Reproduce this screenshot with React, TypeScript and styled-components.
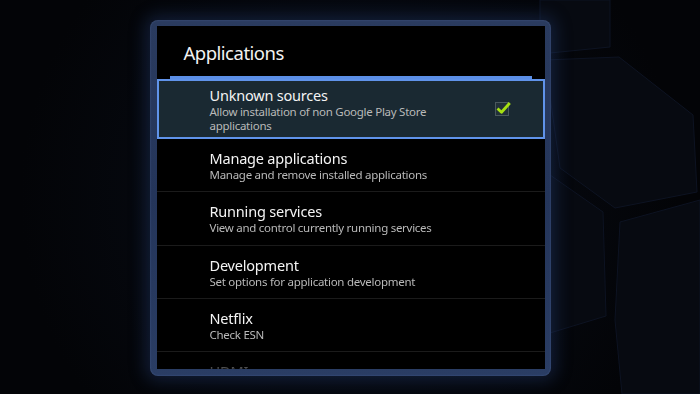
import React from 'react';
import styled, { createGlobalStyle } from 'styled-components';

const GlobalStyle = createGlobalStyle`
    html, body {
        margin: 0;
        padding: 0;
        background: #030407;
    }
    body {
        font-family: "Noto Sans", "Open Sans", "DejaVu Sans", sans-serif;
    }
`;

type Item = {
    title: string;
    summary: string;
    checked?: boolean;
};

const items: Item[] = [
    { title: 'Unknown sources', summary: 'Allow installation of non Google Play Store applications', checked: true },
    { title: 'Manage applications', summary: 'Manage and remove installed applications' },
    { title: 'Running services', summary: 'View and control currently running services' },
    { title: 'Development', summary: 'Set options for application development' },
    { title: 'Netflix', summary: 'Check ESN' },
    { title: 'HDMI', summary: 'Output settings' },
];

// faint hexagon tiles of the launcher wallpaper
const Wallpaper = () => (
    <Backdrop viewBox="0 0 700 394" preserveAspectRatio="none">
        <defs>
            <radialGradient id="halo" cx="350" cy="197" r="330" gradientUnits="userSpaceOnUse">
                <stop offset="0" stopColor="#090e19" />
                <stop offset="1" stopColor="#030407" />
            </radialGradient>
        </defs>
        <rect width="700" height="394" fill="url(#halo)" />
        <g fill="#070a11" stroke="#0d1322" strokeWidth="1">
            <polygon points="540,0 610,0 610,47 540,54" />
            <polygon points="619,57 693,115 697,192 615,208 560,168 545,60" />
            <polygon points="620,222 700,200 700,394 622,394 615,320" />
            <polygon points="540,168 603,212 606,316 540,336" />
        </g>
    </Backdrop>
);

const Check = () => (
    <CheckBox width="18" height="16" viewBox="0 0 18 16">
        <rect x="0.5" y="0.5" width="13" height="13" fill="#223038" stroke="#4a585d" />
        <polyline points="2.5,6.5 6.5,10.2 14.8,1" fill="none" stroke="#a6e012" strokeWidth="2.8" strokeLinejoin="round" />
    </CheckBox>
);

const App = () => {
    return (
        <Screen>
            <GlobalStyle />
            <Wallpaper />
            <Frame>
                <Panel>
                    <Header>Applications</Header>
                    <Accent />
                    <List>
                        {items.map((it) => (
                            <Row key={it.title} $selected={!!it.checked}>
                                <Texts>
                                    <Title>{it.title}</Title>
                                    <Summary>{it.summary}</Summary>
                                </Texts>
                                {it.checked && <Check />}
                            </Row>
                        ))}
                    </List>
                </Panel>
            </Frame>
        </Screen>
    );
};

const Screen = styled.div`
    position: relative;
    width: 700px;
    height: 394px;
    overflow: hidden;
    display: flex;
    justify-content: center;
    align-items: flex-start;
    padding-top: 20px;
    box-sizing: border-box;
`;

const Backdrop = styled.svg`
    position: absolute;
    inset: 0;
    width: 700px;
    height: 394px;
`;

const Frame = styled.div`
    position: relative;
    width: 401px;
    height: 356px;
    box-sizing: border-box;
    padding: 6px 6px 7px 7px;
    border-radius: 8px;
    background: linear-gradient(180deg, #2a3b5f 0%, #24355a 50%, #2a3d64 100%);
    box-shadow: 0 0 16px 5px rgba(40, 70, 130, 0.35), inset 0 0 2px rgba(120, 150, 210, 0.4);
`;

const Panel = styled.div`
    width: 100%;
    height: 100%;
    background: #000;
    display: flex;
    flex-direction: column;
    overflow: hidden;
`;

const Header = styled.div`
    height: 50px;
    flex-shrink: 0;
    box-sizing: border-box;
    padding: 3px 0 0 27px;
    line-height: 48px;
    font-size: 18.5px;
    letter-spacing: -0.5px;
    color: #f2f2f2;
`;

const Accent = styled.div`
    height: 3px;
    flex-shrink: 0;
    margin: 0 13px;
    background: #5b8fe6;
`;

const List = styled.div`
    flex: 1;
    min-height: 0;
    overflow: hidden;
    display: flex;
    flex-direction: column;
    mask-image: linear-gradient(to bottom, #000 calc(100% - 16px), rgba(0, 0, 0, 0.25));
`;

const Row = styled.div<{ $selected: boolean }>`
    display: flex;
    align-items: center;
    min-height: 53.33px;
    box-sizing: border-box;
    padding: 4px 30px 4px ${(p) => (p.$selected ? 51 : 53)}px;
    flex-shrink: 0;
    background: ${(p) => (p.$selected ? '#1a2932' : 'transparent')};
    border: ${(p) => (p.$selected ? '2px solid #6093ea' : 'none')};
    border-bottom: ${(p) => (p.$selected ? '2px solid #6093ea' : '1px solid #1b1b1b')};
`;

const Texts = styled.div`
    flex: 1;
    min-width: 0;
`;

const Title = styled.div`
    font-size: 14.5px;
    letter-spacing: -0.2px;
    line-height: 20px;
    color: #f4f4f4;
`;

const Summary = styled.div`
    font-size: 11.5px;
    letter-spacing: -0.27px;
    line-height: 14px;
    color: #b9b9b9;
    max-width: 250px;
`;

const CheckBox = styled.svg`
    flex-shrink: 0;
    overflow: visible;
    margin-top: 2px;
`;

export default App;
